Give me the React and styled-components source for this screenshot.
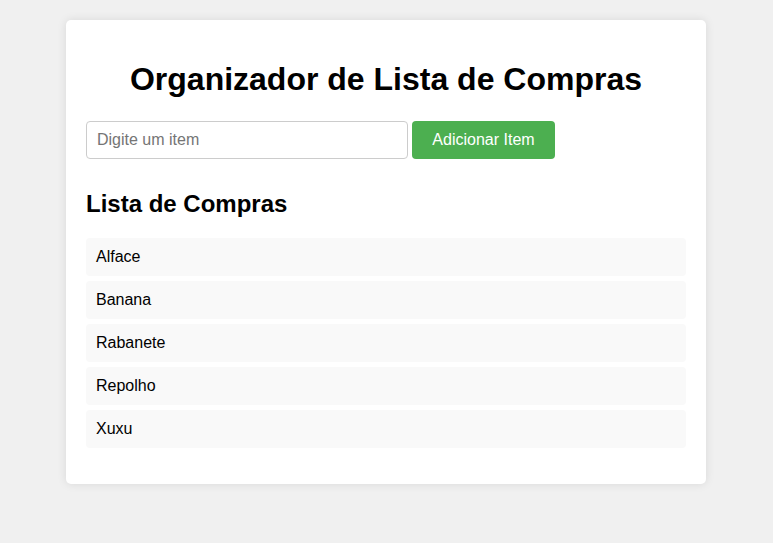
import React from "react";
import styled, { createGlobalStyle } from "styled-components";

const Global = createGlobalStyle`
  html, body { margin: 0; padding: 0; }
  body {
    background: #f0f0f0;
    font-family: Arial, "Liberation Sans", sans-serif;
    color: #000;
  }
`;

const Page = styled.div`
  padding: 20px 1px 20px 0;
`;

const Card = styled.div`
  max-width: 600px;
  margin: 0 auto;
  padding: 20px;
  background: #fff;
  border-radius: 5px;
  box-shadow: 0 0 10px rgba(0, 0, 0, 0.1);
`;

const Title = styled.h1`
  font-size: 32px;
  font-weight: bold;
  text-align: center;
  margin: 21px 0 23px;
`;

const Form = styled.div`
  display: flex;
  gap: 4px;
  margin-bottom: 31px;
`;

const Input = styled.input`
  width: 300px;
  height: 18px;
  padding: 9px 10px;
  border: 1px solid #ccc;
  border-radius: 4px;
  font-family: inherit;
  font-size: 16px;
  outline: none;
  &::placeholder { color: #757575; }
`;

const Button = styled.button`
  background: #4caf50;
  color: #fff;
  border: none;
  border-radius: 4px;
  width: 143px;
  height: 38px;
  padding: 0;
  font-family: inherit;
  font-size: 16px;
  cursor: pointer;
`;

const Subtitle = styled.h2`
  font-size: 24px;
  font-weight: bold;
  margin: 0 0 20px;
`;

const List = styled.ul`
  list-style: none;
  padding: 0;
  margin: 0 0 16px;
  display: flex;
  flex-direction: column;
  gap: 5px;
`;

const Item = styled.li`
  background: #f9f9f9;
  padding: 10px;
  border-radius: 4px;
  font-size: 16px;
  line-height: 18px;
`;

const items = ["Alface", "Banana", "Rabanete", "Repolho", "Xuxu"];

export default function App() {
  return (
    <Page>
      <Global />
      <Card>
        <Title>Organizador de Lista de Compras</Title>
        <Form>
          <Input placeholder="Digite um item" />
          <Button>Adicionar Item</Button>
        </Form>
        <Subtitle>Lista de Compras</Subtitle>
        <List>
          {items.map((i) => (
            <Item key={i}>{i}</Item>
          ))}
        </List>
      </Card>
    </Page>
  );
}
